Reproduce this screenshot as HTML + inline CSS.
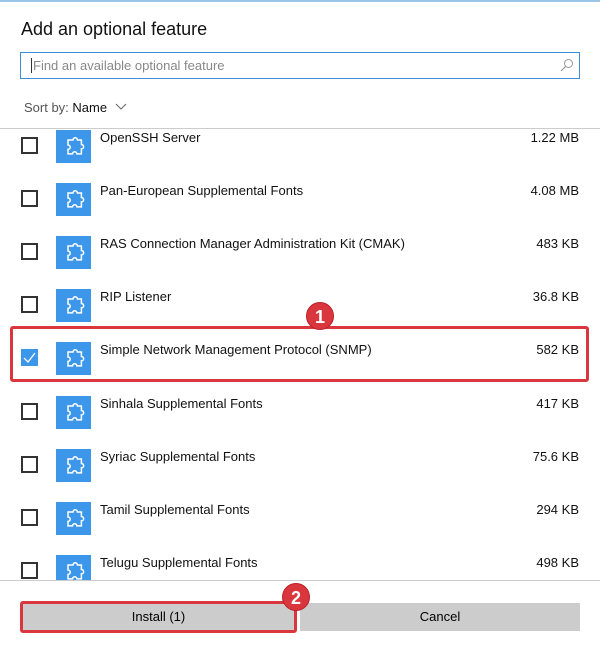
<!DOCTYPE html>
<html><head><style>
*{margin:0;padding:0;box-sizing:border-box}
html,body{width:600px;height:647px;overflow:hidden}
body{background:#fff;font-family:"Liberation Sans",sans-serif;position:relative;color:#000}
.abs{position:absolute}
.row{position:absolute;left:0;width:600px;height:53px}
.cb{position:absolute;left:21px;width:17px;height:17px;border:2px solid #333}
.ic{position:absolute;left:56px;width:35px;height:33px;background:#3c97ea}
.nm{position:absolute;left:100px;font-size:13px;color:#111}
.sz{position:absolute;right:21px;font-size:13px;color:#111}
.badge{position:absolute;width:28px;height:28px;border-radius:50%;background:#d9363e;color:#fff;font-weight:bold;font-size:18px;text-align:center;line-height:28px;border:1px solid #b82028}
</style></head><body>
<div class="abs" style="left:0;top:0;width:600px;height:2px;background:#9cc6e8"></div>
<div class="abs" style="left:21px;top:19px;font-size:18px;color:#111">Add an optional feature</div>
<div class="abs" style="left:20px;top:52px;width:560px;height:27px;border:1.5px solid #3c8fd6"></div>
<div class="abs" style="left:31px;top:58px;font-size:13px;color:#888"><span style="border-left:1px solid #333;padding-left:1px">Find an available optional feature</span></div>
<svg class="abs" style="left:560px;top:58px" width="14" height="14"><circle cx="8.5" cy="5.5" r="4" fill="none" stroke="#999" stroke-width="1"/><line x1="5.5" y1="8.5" x2="1" y2="13" stroke="#999" stroke-width="1.2"/></svg>
<div class="abs" style="left:24px;top:100px;font-size:13px;color:#555">Sort by: <span style="color:#111">Name</span></div>
<svg class="abs" style="left:115px;top:103px" width="12" height="8"><path d="M1 1 L6 6 L11 1" fill="none" stroke="#666" stroke-width="1"/></svg>
<div class="abs" style="left:0;top:128px;width:600px;height:1px;background:#ccc"></div>
<div class="abs" style="left:0;top:129px;width:600px;height:451px;overflow:hidden">
<div style="position:absolute;left:0;top:-129px;width:600px;height:680px">
<div class="row" style="top:120px"><div class="cb" style="top:17px"></div><div class="ic" style="top:10px"><svg width="35" height="33"><path d="M12 10h5a2.2 2.2 0 1 1 4.4 0h4v4.5a2.2 2.2 0 1 1 0 4.4v5h-4.5a2.2 2.2 0 1 0-4.4 0h-4.5v-4.5a2.2 2.2 0 1 0 0-4.4z" fill="none" stroke="#fff" stroke-width="1.5"/></svg></div><div class="nm" style="top:10px">OpenSSH Server</div><div class="sz" style="top:10px">1.22 MB</div></div>
<div class="row" style="top:173px"><div class="cb" style="top:17px"></div><div class="ic" style="top:10px"><svg width="35" height="33"><path d="M12 10h5a2.2 2.2 0 1 1 4.4 0h4v4.5a2.2 2.2 0 1 1 0 4.4v5h-4.5a2.2 2.2 0 1 0-4.4 0h-4.5v-4.5a2.2 2.2 0 1 0 0-4.4z" fill="none" stroke="#fff" stroke-width="1.5"/></svg></div><div class="nm" style="top:10px">Pan-European Supplemental Fonts</div><div class="sz" style="top:10px">4.08 MB</div></div>
<div class="row" style="top:226px"><div class="cb" style="top:17px"></div><div class="ic" style="top:10px"><svg width="35" height="33"><path d="M12 10h5a2.2 2.2 0 1 1 4.4 0h4v4.5a2.2 2.2 0 1 1 0 4.4v5h-4.5a2.2 2.2 0 1 0-4.4 0h-4.5v-4.5a2.2 2.2 0 1 0 0-4.4z" fill="none" stroke="#fff" stroke-width="1.5"/></svg></div><div class="nm" style="top:10px">RAS Connection Manager Administration Kit (CMAK)</div><div class="sz" style="top:10px">483 KB</div></div>
<div class="row" style="top:279px"><div class="cb" style="top:17px"></div><div class="ic" style="top:10px"><svg width="35" height="33"><path d="M12 10h5a2.2 2.2 0 1 1 4.4 0h4v4.5a2.2 2.2 0 1 1 0 4.4v5h-4.5a2.2 2.2 0 1 0-4.4 0h-4.5v-4.5a2.2 2.2 0 1 0 0-4.4z" fill="none" stroke="#fff" stroke-width="1.5"/></svg></div><div class="nm" style="top:10px">RIP Listener</div><div class="sz" style="top:10px">36.8 KB</div></div>
<div class="row" style="top:333px"><div class="cb" style="top:16px;background:#3c97ea;border-color:#3c97ea"><svg width="13" height="13" style="position:absolute;left:0;top:0"><path d="M1 7 L5 11 L12 2" fill="none" stroke="#fff" stroke-width="1.3"/></svg></div><div class="ic" style="top:9px"><svg width="35" height="33"><path d="M12 10h5a2.2 2.2 0 1 1 4.4 0h4v4.5a2.2 2.2 0 1 1 0 4.4v5h-4.5a2.2 2.2 0 1 0-4.4 0h-4.5v-4.5a2.2 2.2 0 1 0 0-4.4z" fill="none" stroke="#fff" stroke-width="1.5"/></svg></div><div class="nm" style="top:9px">Simple Network Management Protocol (SNMP)</div><div class="sz" style="top:9px">582 KB</div></div>
<div class="row" style="top:386px"><div class="cb" style="top:17px"></div><div class="ic" style="top:10px"><svg width="35" height="33"><path d="M12 10h5a2.2 2.2 0 1 1 4.4 0h4v4.5a2.2 2.2 0 1 1 0 4.4v5h-4.5a2.2 2.2 0 1 0-4.4 0h-4.5v-4.5a2.2 2.2 0 1 0 0-4.4z" fill="none" stroke="#fff" stroke-width="1.5"/></svg></div><div class="nm" style="top:10px">Sinhala Supplemental Fonts</div><div class="sz" style="top:10px">417 KB</div></div>
<div class="row" style="top:439px"><div class="cb" style="top:17px"></div><div class="ic" style="top:10px"><svg width="35" height="33"><path d="M12 10h5a2.2 2.2 0 1 1 4.4 0h4v4.5a2.2 2.2 0 1 1 0 4.4v5h-4.5a2.2 2.2 0 1 0-4.4 0h-4.5v-4.5a2.2 2.2 0 1 0 0-4.4z" fill="none" stroke="#fff" stroke-width="1.5"/></svg></div><div class="nm" style="top:10px">Syriac Supplemental Fonts</div><div class="sz" style="top:10px">75.6 KB</div></div>
<div class="row" style="top:492px"><div class="cb" style="top:17px"></div><div class="ic" style="top:10px"><svg width="35" height="33"><path d="M12 10h5a2.2 2.2 0 1 1 4.4 0h4v4.5a2.2 2.2 0 1 1 0 4.4v5h-4.5a2.2 2.2 0 1 0-4.4 0h-4.5v-4.5a2.2 2.2 0 1 0 0-4.4z" fill="none" stroke="#fff" stroke-width="1.5"/></svg></div><div class="nm" style="top:10px">Tamil Supplemental Fonts</div><div class="sz" style="top:10px">294 KB</div></div>
<div class="row" style="top:545px"><div class="cb" style="top:17px"></div><div class="ic" style="top:10px"><svg width="35" height="33"><path d="M12 10h5a2.2 2.2 0 1 1 4.4 0h4v4.5a2.2 2.2 0 1 1 0 4.4v5h-4.5a2.2 2.2 0 1 0-4.4 0h-4.5v-4.5a2.2 2.2 0 1 0 0-4.4z" fill="none" stroke="#fff" stroke-width="1.5"/></svg></div><div class="nm" style="top:10px">Telugu Supplemental Fonts</div><div class="sz" style="top:10px">498 KB</div></div>
</div></div>
<div class="abs" style="left:0;top:580px;width:600px;height:1px;background:#ccc"></div>
<div class="abs" style="left:10px;top:326px;width:579px;height:56px;border:3px solid #d9363e;border-radius:3px"></div>
<div class="badge" style="left:306px;top:302px">1</div>
<div class="abs" style="left:20px;top:601px;width:277px;height:32px;background:#ccc;border:3px solid #d9363e;border-radius:3px;font-size:13px;text-align:center;line-height:26px">Install (1)</div>
<div class="abs" style="left:300px;top:603px;width:280px;height:28px;background:#ccc;font-size:13px;text-align:center;line-height:28px">Cancel</div>
<div class="badge" style="left:282px;top:583px">2</div>
</body></html>
